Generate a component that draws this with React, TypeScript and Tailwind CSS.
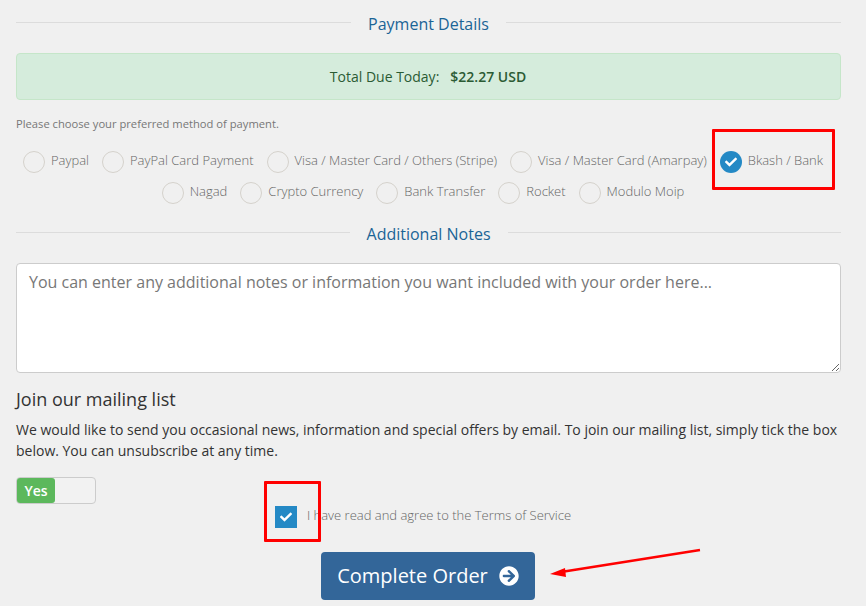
import React from "react";
import { FaArrowCircleRight, FaCheck } from "react-icons/fa";

const methods = [
  "Paypal",
  "PayPal Card Payment",
  "Visa / Master Card / Others (Stripe)",
  "Visa / Master Card (Amarpay)",
  "Bkash / Bank",
  "Nagad",
  "Crypto Currency",
  "Bank Transfer",
  "Rocket",
  "Modulo Moip",
];

const SubHeading = ({ title }: { title: string }) => (
  <div className="flex items-center gap-[17px] h-[24px]">
    <div className="flex-1 h-[1px] bg-[#dcdcdc]" />
    <h2 className="mt-[4px] text-[16px] leading-[24px] font-normal text-[#1a6496]">{title}</h2>
    <div className="flex-1 h-[1px] bg-[#dcdcdc]" />
  </div>
);

const RadioItem = ({ label, checked }: { label: string; checked: boolean }) => (
  <label className="flex items-center gap-[6px] mr-[13px] h-[30px] text-[13px] leading-[18px] font-light text-[#666]">
    {checked ? (
      <span className="w-[22px] h-[22px] rounded-full bg-[#2489c5] flex items-center justify-center text-white">
        <FaCheck className="w-[12px] h-[12px]" />
      </span>
    ) : (
      <span className="w-[22px] h-[22px] rounded-full border border-[#d5d2cc]" />
    )}
    <span className="-mt-[4px]">{label}</span>
  </label>
);

export default function App() {
  return (
    <div
      className="relative w-[866px] h-[606px] overflow-hidden bg-[#f0f0f0] pl-[16px] pr-[25px] pt-[10px] text-[#333]"
      style={{ fontFamily: '"Open Sans", sans-serif' }}
    >
      <SubHeading title="Payment Details" />

      <div className="mt-[19px] h-[47px] pr-[1px] rounded-[4px] border border-[#c5e6c9] bg-[#d5ecdc] flex items-center justify-center text-[14px] text-[#2b5b34]">
        <span>Total Due Today:</span>
        <strong className="ml-[11px] font-semibold">$22.27 USD</strong>
      </div>

      <p className="mt-[16px] text-[11.2px] leading-[16px] text-[#777]">
        Please choose your preferred method of payment.
      </p>

      <div className="mt-[15px] pl-[2px] flex flex-wrap justify-center gap-y-[1px]">
        {methods.map((m) => (
          <RadioItem key={m} label={m} checked={m === "Bkash / Bank"} />
        ))}
      </div>

      <div className="mt-[12px]">
        <SubHeading title="Additional Notes" />
      </div>

      <textarea
        className="mt-[19px] block w-full h-[110px] rounded-[4px] border border-[#ccc] bg-white px-[12px] py-[6px] text-[16px] leading-[24px] placeholder:text-[#777]"
        placeholder="You can enter any additional notes or information you want included with your order here..."
      />

      <h3 className="mt-[14px] text-[18px] leading-[24px] font-normal text-[#333]">Join our mailing list</h3>
      <p className="mt-[8px] text-[14px] leading-[21px] text-[#333]">
        We would like to send you occasional news, information and special offers by email. To join our mailing list, simply tick the box below. You can unsubscribe at any time.
      </p>

      <div className="mt-[16px] w-[80px] h-[27px] rounded-[4px] border border-[#ccc] bg-[#f2f2f2]">
        <div className="w-[38px] h-full rounded-[3px] bg-[#5cb85c] text-white text-[14px] font-semibold flex items-center justify-center">
          Yes
        </div>
      </div>

      <div className="flex justify-center">
        <label className="flex items-center gap-[10px] mt-[2px] mr-[11px] text-[13px] leading-[22px] font-light text-[#666]">
          <span className="w-[22px] h-[22px] bg-[#2489c5] flex items-center justify-center text-white">
            <FaCheck className="w-[12px] h-[12px]" />
          </span>
          <span className="-mt-[4px]">I have read and agree to the Terms of Service</span>
        </label>
      </div>

      <div className="mt-[24px] flex justify-center">
        <button className="h-[48px] w-[214px] mr-[1px] rounded-[4px] bg-[#369] text-white text-[20px] flex items-center justify-center gap-[11px]">
          Complete Order
          <FaArrowCircleRight className="w-[20px] h-[20px]" />
        </button>
      </div>

      {/* red annotations pasted on top of the screenshot */}
      <div className="absolute left-[712px] top-[129px] w-[123px] h-[61px] border-[3px] border-[#f00] rounded-[1px]" />
      <div className="absolute left-[264px] top-[481px] w-[57px] h-[61px] border-[3px] border-[#f00] rounded-[1px]" />
      <svg className="absolute left-[545px] top-[540px]" width="160" height="40" viewBox="0 0 160 40">
        <line x1="155" y1="10" x2="16" y2="32" stroke="#f00" strokeWidth="2.5" />
        <polygon points="5,34 20,28 21,37" fill="#f00" />
      </svg>
    </div>
  );
}
